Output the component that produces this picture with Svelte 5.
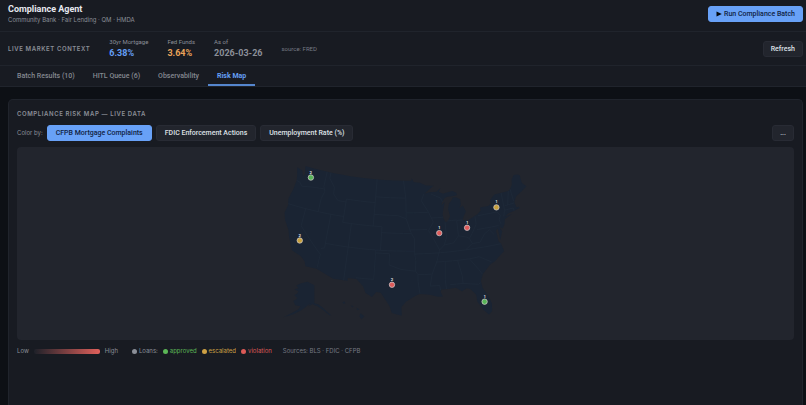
<script lang="ts">
	type Point = [number, number];

	const stats = [
		{ label: '30yr Mortgage', value: '6.38%', tone: 'blue' },
		{ label: 'Fed Funds', value: '3.64%', tone: 'orange' },
		{ label: 'As of', value: '2026-03-26', tone: 'muted' }
	];
	const tabs = ['Batch Results (10)', 'HITL Queue (6)', 'Observability', 'Risk Map'];
	const layers = ['CFPB Mortgage Complaints', 'FDIC Enforcement Actions', 'Unemployment Rate (%)'];
	const statuses = ['approved', 'escalated', 'violation'];

	let activeTab = $state('Risk Map');
	let activeLayer = $state('CFPB Mortgage Complaints');

	const markers = [
		{ x: 293.5, y: 30.5, count: 2, status: 'approved' },
		{ x: 282.4, y: 93.4, count: 2, status: 'escalated' },
		{ x: 374.5, y: 137.6, count: 2, status: 'violation' },
		{ x: 421.7, y: 86, count: 1, status: 'violation' },
		{ x: 449.5, y: 80.7, count: 1, status: 'violation' },
		{ x: 478.8, y: 60.3, count: 1, status: 'escalated' },
		{ x: 467, y: 154.5, count: 1, status: 'approved' }
	];

	// Albers equal area, standard parallels 29.5 and 45.5
	const rad = Math.PI / 180;
	const n = (Math.sin(29.5 * rad) + Math.sin(45.5 * rad)) / 2;
	const c = Math.cos(29.5 * rad) ** 2 + 2 * n * Math.sin(29.5 * rad);
	const rho = (lat: number) => Math.sqrt(c - 2 * n * Math.sin(lat * rad)) / n;

	function project([lon, lat]: Point): Point {
		const k = 335;
		const theta = n * (lon + 96) * rad;
		const r = rho(lat);
		return [390.7 + k * r * Math.sin(theta), 94 + k * (r * Math.cos(theta) - rho(38.7))];
	}

	// Cut long edges into short ones so parallels keep their curve
	function toPath(line: Point[], close = false) {
		const out: string[] = [];
		line.forEach((p, i) => {
			if (i > 0) {
				const q = line[i - 1];
				const steps = Math.max(1, Math.ceil(Math.abs(p[0] - q[0]) / 2));
				for (let s = 1; s < steps; s++) {
					const t = s / steps;
					out.push(fmt(project([q[0] + (p[0] - q[0]) * t, q[1] + (p[1] - q[1]) * t])));
				}
			}
			out.push(fmt(project(p)));
		});
		return 'M' + out.join('L') + (close ? 'Z' : '');
	}

	function fmt(p: Point) {
		return p[0].toFixed(1) + ',' + p[1].toFixed(1);
	}

	const land: Point[][] = [
		// lower 48
		[
			[-124.7, 48.4], [-123.2, 48.1], [-122.7, 47.2], [-122.3, 47.7], [-122.8, 49], [-95.2, 49], [-95.1, 49.4],
			[-94.6, 48.7], [-93, 48.6], [-91.5, 48.1], [-89.6, 48], [-92, 46.7], [-90.7, 46.9], [-89, 46.9],
			[-87.9, 47.5], [-88.4, 46.9], [-87.4, 46.5], [-86, 46.7], [-85, 46.8], [-84.1, 46.4], [-84, 46],
			[-84.8, 45.9], [-86.5, 45.9], [-87.1, 45.7], [-87.8, 45], [-88, 44.5], [-87.1, 45.1], [-87.6, 44],
			[-87.9, 43], [-87.8, 42.3], [-87.4, 41.6], [-86.8, 41.8], [-86.2, 42.6], [-86.5, 43.7], [-86.2, 44.7],
			[-85.6, 45.1], [-85, 45.7], [-84.2, 45.6], [-83.4, 45.2], [-83.3, 44.3], [-83.9, 43.7], [-82.9, 44.1],
			[-82.4, 43], [-83.1, 42.2], [-83.4, 41.7], [-82.5, 41.4], [-81.3, 41.8], [-79.8, 42.3], [-78.9, 42.8],
			[-79, 43.3], [-77, 43.3], [-76.2, 43.6], [-76.3, 44.2], [-75, 45], [-71.5, 45], [-70.9, 45.3],
			[-70.3, 45.9], [-70, 46.7], [-69.2, 47.4], [-68.3, 47.3], [-67.8, 47.1], [-67.8, 45.7], [-67, 44.9],
			[-68.5, 44.3], [-70, 43.8], [-70.7, 43.1], [-70.8, 42.6], [-70.6, 41.9], [-70.1, 42], [-70, 41.7],
			[-71.2, 41.5], [-72.9, 41.3], [-73.7, 40.9], [-72, 41.1], [-73.9, 40.5], [-74.2, 39.7], [-74.9, 39],
			[-75.5, 39.5], [-75.1, 38.6], [-75.9, 37.2], [-75.9, 39.2], [-76.4, 38.9], [-76.3, 37.1], [-75.9, 36.6],
			[-75.6, 35.3], [-76.6, 34.7], [-77.9, 33.9], [-79, 33.5], [-80.8, 32.1], [-81.4, 31], [-81.3, 29.8],
			[-80.5, 28.4], [-80, 26.9], [-80.2, 25.6], [-80.9, 25.1], [-81.8, 26.1], [-82.7, 27.6], [-82.7, 28.8],
			[-83.7, 29.9], [-84.4, 30.1], [-85.4, 29.7], [-86.5, 30.4], [-88, 30.3], [-89.4, 30.3], [-89.6, 29.9],
			[-89.2, 29.1], [-90.2, 29.1], [-91.3, 29.4], [-92.2, 29.6], [-93.8, 29.7], [-94.8, 29.3], [-96.4, 28.4],
			[-97.3, 27.5], [-97.2, 26], [-99.1, 26.4], [-99.6, 27.6], [-100.7, 29], [-101.4, 29.8], [-102.3, 29.9],
			[-103.1, 29], [-104.4, 29.6], [-105, 30.7], [-106.5, 31.8], [-108.2, 31.8], [-108.2, 31.3], [-111.1, 31.3],
			[-114.8, 32.5], [-117.1, 32.5], [-117.5, 33.3], [-118.5, 34], [-120.6, 34.6], [-121.9, 36.6], [-122.5, 37.8],
			[-123.8, 39.2], [-124.4, 40.4], [-124.1, 41.8], [-124.5, 42.8], [-124, 44.8], [-123.9, 46.2], [-124.1, 47]
		]
	];

	const borders: Point[][] = [
		[[-123.9, 46.2], [-123, 46.1], [-122.3, 45.5], [-121, 45.7], [-119, 45.9], [-116.9, 46]],
		[[-117, 49], [-117, 46.4], [-116.5, 45.6], [-117, 44.3], [-117, 42]],
		[[-124.2, 42], [-111, 42]],
		[[-120, 42], [-120, 39], [-114.6, 35], [-114.7, 32.7]],
		[[-114, 42], [-114, 36.2], [-114.7, 36]],
		[[-116, 49], [-116, 48], [-114.4, 46.6], [-114.3, 45.5], [-113, 44.5], [-111, 44.5], [-111, 41]],
		[[-111, 45], [-104, 45]],
		[[-111, 45], [-111, 44.5]],
		[[-114, 37], [-94.6, 37]],
		[[-111, 41], [-102, 41]],
		[[-109, 41], [-109, 31.3]],
		[[-104, 49], [-104, 41]],
		[[-104, 46], [-96.6, 46]],
		[[-104, 43], [-98.5, 43], [-96.5, 42.5]],
		[[-102, 41], [-102, 37]],
		[[-102, 40], [-95.3, 40]],
		[[-103, 37], [-103, 32], [-106.6, 32]],
		[[-103, 36.5], [-100, 36.5], [-100, 34.6], [-97.5, 33.9], [-94.5, 33.6]],
		[[-97.2, 49], [-96.6, 46], [-96.5, 43.5], [-96.5, 42.5], [-95.3, 40], [-94.6, 39.1], [-94.6, 36.5], [-94.4, 35.4], [-94.5, 33.6], [-94, 33], [-94, 31.8], [-93.7, 29.8]],
		[[-96.5, 43.5], [-91.2, 43.5]],
		[[-95.8, 40.6], [-91.7, 40.6]],
		[[-92.1, 46.7], [-92.8, 45.5], [-91.2, 43.5], [-90.2, 41.8], [-91.4, 40.4], [-90.2, 38.7], [-89.2, 37], [-90, 35], [-91.1, 33], [-91.6, 31], [-89.7, 31], [-89.6, 30.2]],
		[[-90.6, 42.5], [-87.8, 42.5]],
		[[-90.4, 46.6], [-88.1, 45.8], [-87.7, 45.1]],
		[[-94.6, 36.5], [-81.7, 36.6], [-75.9, 36.6]],
		[[-94, 33], [-91.2, 33]],
		[[-90.2, 35], [-83.1, 35], [-81, 35.1], [-78.6, 33.9]],
		[[-88.2, 35], [-88.5, 31.9], [-88.4, 30.3]],
		[[-85.6, 35], [-85, 32.3], [-85, 31], [-82, 30.5], [-81.5, 30.7]],
		[[-87.6, 31], [-85, 31]],
		[[-83.1, 35], [-81.5, 33], [-80.9, 32.1]],
		[[-87.5, 41.7], [-87.5, 39], [-88.1, 37.8], [-89.2, 37]],
		[[-88.1, 37.8], [-86, 38], [-84.8, 39.1], [-83, 38.7], [-82.5, 38.4], [-81.7, 39.2], [-80.5, 40.6], [-80.5, 42]],
		[[-84.8, 39.1], [-84.8, 41.7], [-83.4, 41.7]],
		[[-84.8, 41.8], [-87, 41.8]],
		[[-82.5, 38.4], [-82, 37.5], [-83.6, 36.6]],
		[[-82, 37.5], [-80.3, 37.5], [-79, 38.8], [-77.8, 39.3], [-77, 38.4]],
		[[-80.5, 39.7], [-75.6, 39.7]],
		[[-79.8, 42], [-75.3, 42], [-74.7, 41.3], [-75.2, 40.6], [-75, 39.9]],
		[[-74, 41], [-73.5, 42], [-73.3, 45]],
		[[-73.5, 42], [-71.4, 42], [-71.4, 41.5]],
		[[-73.3, 42.7], [-70.9, 42.8]],
		[[-72.5, 42.7], [-71.5, 45]],
		[[-71, 45.3], [-70.9, 43.1]]
	];
</script>

<div class="page">
	<header class="topbar">
		<div>
			<h1>Compliance Agent</h1>
			<p>Community Bank · Fair Lending · QM · HMDA</p>
		</div>
		<button class="btn primary">
			<svg class="play" viewBox="0 0 6 6" aria-hidden="true"><path d="M0.5 0.5L5.8 3L0.5 5.5Z" /></svg>
			Run Compliance Batch
		</button>
	</header>

	<section class="market">
		<h2>Live Market Context</h2>
		{#each stats as stat}
			<div class="stat">
				<span class="stat-label">{stat.label}</span>
				<span class="stat-value {stat.tone}">{stat.value}</span>
			</div>
		{/each}
		<span class="source">source: FRED</span>
		<button class="btn push">Refresh</button>
	</section>

	<nav class="tabs">
		{#each tabs as tab}
			<button class="tab" class:active={activeTab === tab} onclick={() => (activeTab = tab)}>{tab}</button>
		{/each}
	</nav>

	<main>
		<section class="card">
			<h2>Compliance Risk Map — Live Data</h2>
			<div class="controls">
				<span class="hint">Color by:</span>
				{#each layers as layer}
					<button class="btn layer" class:primary={activeLayer === layer} onclick={() => (activeLayer = layer)}>{layer}</button>
				{/each}
				<button class="btn push" aria-label="More">...</button>
			</div>

			<div class="map">
				<svg viewBox="0 0 776 193" role="img" aria-label="Risk map of the United States">
					<g class="land">
						{#each land as shape}
							<path d={toPath(shape, true)} />
						{/each}
						<!-- Alaska -->
						<path d="M279 138L284 136L290 134.500L297 138L297 156L301 157L305 160L310 165L314 168L312 168L306 163L300 159L295 157L291 159L293 156L288 160L284 163L276 167L266 170L274 166L281 162L283 159L278 158L276 154L280 151L277 148L280 146L281 144L277 142L281 141Z" />
						<!-- Hawaii -->
						<path d="M325 155L327 154L328 156L326 156.500ZM333 158L336 159L335 160ZM339 160.500L342 162L340 163ZM343 166L347 169L344 172L342 169Z" />
					</g>
					<g class="borders">
						{#each borders as line}
							<path d={toPath(line)} />
						{/each}
					</g>
					{#each markers as m}
						<circle class="marker {m.status}" cx={m.x} cy={m.y} r="2.700" />
						<text x={m.x} y={m.y - 4}>{m.count}</text>
					{/each}
				</svg>
			</div>

			<div class="legend">
				<div class="scale">
					<span>Low</span>
					<span class="ramp"></span>
					<span>High</span>
				</div>
				<div class="keys">
					<span class="key"><i class="dot"></i>Loans:</span>
					{#each statuses as status}
						<span class="key {status}"><i class="dot"></i>{status}</span>
					{/each}
				</div>
				<span class="sources">Sources: BLS · FDIC · CFPB</span>
			</div>
		</section>
	</main>
</div>

<style>
	:global(body) {
		background: #0d1015;
	}
	.page {
		min-height: 100vh;
		display: flex;
		flex-direction: column;
		box-sizing: border-box;
		font-family: Inter, 'Liberation Sans', sans-serif;
		font-size: 7px;
		line-height: 10px;
		color: #8b8f98;
	}
	h1,
	h2,
	p {
		margin: 0;
	}
	h1 {
		font-size: 9px;
		line-height: 12px;
		font-weight: 700;
		color: #e6e8ee;
	}
	h1,
	.btn,
	.tab,
	.stat,
	.source {
		font-family: Roboto, Inter, sans-serif;
	}
	h2 {
		font-size: 6px;
		line-height: 8px;
		font-weight: 600;
		letter-spacing: 0.1em;
		text-transform: uppercase;
	}
	p {
		font-size: 6px;
	}
	.topbar,
	.market,
	.tabs {
		display: flex;
		align-items: center;
		padding: 0 3px 0 8px;
		background: #181b22;
		border-bottom: 1px solid #20242c;
	}
	.topbar {
		justify-content: space-between;
		padding-top: 3px;
		padding-bottom: 6px;
	}
	.btn {
		display: inline-flex;
		align-items: center;
		gap: 2px;
		height: 16px;
		padding: 0 7px;
		border: 1px solid #282b34;
		border-radius: 3px;
		background: #22252d;
		color: #dfe1e7;
		font-size: 7px;
		line-height: 10px;
		font-weight: 500;
		white-space: nowrap;
		cursor: pointer;
	}
	.btn.layer {
		padding: 0 8px;
	}
	.btn.primary {
		background: #68a1f7;
		border-color: #68a1f7;
		color: #10223f;
	}
	.push {
		margin-left: auto;
	}
	.play {
		width: 6px;
		height: 6px;
		fill: #05080d;
	}
	.market {
		gap: 19px;
		height: 33px;
	}
	.stat {
		display: flex;
		flex-direction: column;
		gap: 1px;
	}
	.stat-label,
	.source {
		font-size: 6px;
		line-height: 8px;
	}
	.source {
		color: #767a83;
	}
	.stat-value {
		font-size: 9px;
		line-height: 12px;
		font-weight: 700;
	}
	.blue {
		color: #659ff5;
	}
	.orange {
		color: #e8a35a;
	}
	.tab {
		padding: 5px 9px 3px;
		border: 0;
		border-bottom: 2px solid transparent;
		background: none;
		color: #858991;
		font-size: 7px;
		line-height: 10px;
		font-weight: 500;
		cursor: pointer;
	}
	.tab.active {
		border-bottom-color: #5586cd;
		color: #659ff5;
		font-weight: 700;
	}
	main {
		flex: 1;
		display: flex;
		padding: 12px 3px 0 8px;
	}
	.card {
		flex: 1;
		min-width: 0;
		padding: 10px 8px;
		border: 1px solid #20242c;
		border-bottom: 0;
		border-radius: 5px 5px 0 0;
		background: #181b22;
	}
	.controls {
		display: flex;
		align-items: center;
		gap: 4px;
		margin: 7px 0 6px;
	}
	.hint {
		font-size: 6px;
	}
	.map {
		border-radius: 4px;
		background: #22252d;
	}
	.map svg {
		display: block;
		width: 100%;
	}
	.land path {
		fill: #1a2433;
	}
	.borders path {
		fill: none;
		stroke: #202b3b;
		stroke-width: 0.6;
	}
	.marker {
		stroke: #d5cfd0;
		stroke-width: 0.7;
	}
	.marker.approved {
		fill: #56b457;
	}
	.marker.escalated {
		fill: #c6a03c;
	}
	.marker.violation {
		fill: #de5c5c;
	}
	text {
		font-size: 4px;
		font-weight: 700;
		text-anchor: middle;
		fill: #d4d7de;
	}
	.legend {
		display: flex;
		align-items: center;
		gap: 11px;
		margin-top: 6px;
		font-size: 6px;
	}
	.scale,
	.keys,
	.key {
		display: flex;
		align-items: center;
	}
	.scale {
		gap: 5px;
		margin-right: 3px;
	}
	.ramp {
		width: 66px;
		height: 5px;
		border-radius: 2px;
		background: linear-gradient(to right, #1e2129, #e0605b);
	}
	.keys {
		gap: 5px;
	}
	.key {
		gap: 2px;
	}
	.dot {
		width: 5px;
		height: 5px;
		border-radius: 50%;
		background: currentColor;
	}
	.key.approved {
		color: #5cb757;
	}
	.key.escalated {
		color: #cda044;
	}
	.key.violation {
		color: #dc5a57;
	}
	.sources {
		color: #767a83;
	}
</style>
